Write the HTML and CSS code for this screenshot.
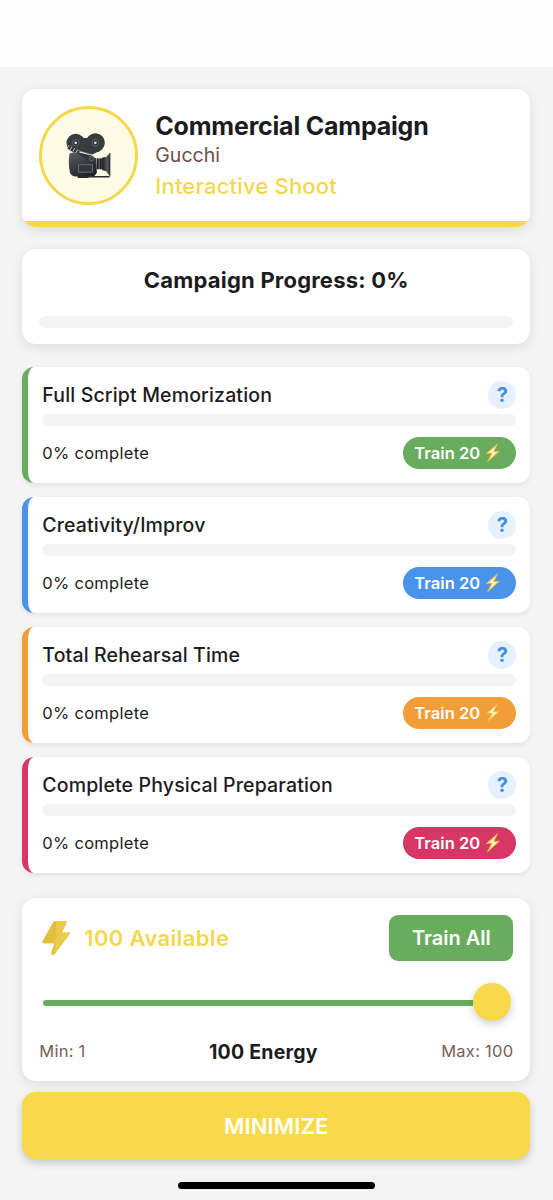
FILE: index.html
```html
<!DOCTYPE html>
<html lang="en">
<head>
<meta charset="utf-8">
<title>Commercial Campaign</title>
<link rel="stylesheet" href="styles.css">
</head>
<body>
<svg class="defs" width="0" height="0" aria-hidden="true">
  <defs>
    <linearGradient id="boltFill" x1="0" y1="0" x2="1" y2="1"><stop offset="0" stop-color="#f5b83a"/><stop offset=".5" stop-color="#fff3a0"/><stop offset="1" stop-color="#f3a533"/></linearGradient>
    <symbol id="bolt" viewBox="0 0 16 20"><path d="M12.400 1 1.300 10.600 7 10.100 2.600 18.700 14.400 8.200 8.600 8.700Z" fill="url(#boltFill)" stroke="#f2b544" stroke-width=".9" stroke-linejoin="round"/><path d="M10.500 4 4.200 9.600 8.600 9.200 5.700 14.700 11.600 9.300 7 9.700Z" fill="#fff8c9"/></symbol>
  </defs>
</svg>
<header class="status-bar"></header>
<main class="screen">
  <section class="card campaign">
    <div class="avatar">
      <svg class="camera" viewBox="0 0 48 48">
        <defs>
          <linearGradient id="body" x1="0" y1="0" x2=".6" y2="1"><stop offset="0" stop-color="#5b6266"/><stop offset=".5" stop-color="#3a4044"/><stop offset="1" stop-color="#222327"/></linearGradient>
          <linearGradient id="horn" x1="0" x2="1"><stop offset="0" stop-color="#17191b"/><stop offset=".6" stop-color="#565d62"/><stop offset="1" stop-color="#25282a"/></linearGradient>
        </defs>
        <circle cx="11" cy="11.300" r="9.500" fill="#383c3f"/>
        <circle cx="31" cy="11" r="9.700" fill="#383c3f"/>
        <path d="M14 4.500Q21 8 28 4.500L35 19.500 28 23 12 19Z" fill="#383c3f"/>
        <path d="M4.500 22 10 20.500 26 23.500 32 27 32.500 41Q31 45.500 27 45.500H11Q6 45 5 41Q3 32 4.500 22Z" fill="url(#body)"/>
        <path d="M13 45H45.500V46.500H24V47H13Z" fill="#2b2c2f"/>
        <rect x="32.500" y="27" width="6.500" height="11" fill="#50575b"/>
        <path d="M33.300 27V38M36.500 27V38" stroke="#202427" stroke-width="1.500"/>
        <path d="M38 26 42 25.500 46.300 21V45.800L42 40 38 39Z" fill="url(#horn)"/>
        <rect x="14" y="33.500" width="14" height="7.500" fill="#34363a" stroke="#858585" stroke-width=".7"/>
        <path d="M2.500 14.500 12 20 27 25 30 30H25L13 22 2.500 17Z" fill="#303538"/>
        <path d="M2 17 4 13.500M5 18.500 7 15M8 20 10 16.500M11 21.500 13 18" stroke="#d1d2d2" stroke-width=".9"/>
        <path d="M13 18.500 28 24" stroke="#888e91" stroke-width=".6"/>
        <circle cx="27" cy="27" r="2.500" fill="#41474b" stroke="#777d80" stroke-width=".6"/>
        <circle cx="11" cy="11" r="3.300" fill="#292d30" stroke="#777d80" stroke-width=".7"/><circle cx="11" cy="11" r="1.400" fill="#dedede"/>
        <circle cx="31" cy="11" r="3.300" fill="#292d30" stroke="#777d80" stroke-width=".7"/><circle cx="31" cy="11" r="1.400" fill="#dedede"/>
      </svg>
    </div>
    <div class="campaign-info">
      <h1 class="campaign-title">Commercial Campaign</h1>
      <p class="brand">Gucchi</p>
      <p class="kind">Interactive Shoot</p>
    </div>
  </section>

  <section class="card progress">
    <h2 class="progress-title">Campaign Progress: 0%</h2>
    <div class="bar"></div>
  </section>

  <section class="tasks">
    <article class="task green">
      <div class="row"><h3 class="task-title">Full Script Memorization</h3><button class="help">?</button></div>
      <div class="bar"></div>
      <div class="row"><span class="complete">0% complete</span><button class="train"><span>Train 20</span><svg class="mini-bolt"><use href="#bolt"/></svg></button></div>
    </article>
    <article class="task blue">
      <div class="row"><h3 class="task-title">Creativity/Improv</h3><button class="help">?</button></div>
      <div class="bar"></div>
      <div class="row"><span class="complete">0% complete</span><button class="train"><span>Train 20</span><svg class="mini-bolt"><use href="#bolt"/></svg></button></div>
    </article>
    <article class="task orange">
      <div class="row"><h3 class="task-title">Total Rehearsal Time</h3><button class="help">?</button></div>
      <div class="bar"></div>
      <div class="row"><span class="complete">0% complete</span><button class="train"><span>Train 20</span><svg class="mini-bolt"><use href="#bolt"/></svg></button></div>
    </article>
    <article class="task pink">
      <div class="row"><h3 class="task-title">Complete Physical Preparation</h3><button class="help">?</button></div>
      <div class="bar"></div>
      <div class="row"><span class="complete">0% complete</span><button class="train"><span>Train 20</span><svg class="mini-bolt"><use href="#bolt"/></svg></button></div>
    </article>
  </section>

  <section class="card energy">
    <div class="row">
      <div class="available">
        <svg class="big-bolt" viewBox="0 0 28 35"><path d="M13.500 1H23Q25 1 24.200 3L20 12H26.500Q28.800 12 27.300 14L12.600 33.500Q10.800 35.500 9.500 34Q8.800 33 9.300 31.500L12.300 23H2Q-.3 23 .6 20.800L11 2.500Q12 1 13.500 1Z" fill="#ebcb4c"/><path d="M14 1H13.500Q12 1 11 2.500L.6 20.800Q-.3 23 2 23H12.300L14 17Z" fill="#e3bd3e"/><path d="M12.300 23 9.300 31.500Q8.800 33 9.500 34 10.800 35.500 12.600 33.500L14 22Z" fill="#e5c343"/></svg>
        <span class="available-text">100 Available</span>
      </div>
      <button class="train-all">Train All</button>
    </div>
    <div class="slider"><div class="track"></div><div class="thumb"></div></div>
    <div class="limits"><span class="limit">Min: 1</span><strong class="amount">100 Energy</strong><span class="limit">Max: 100</span></div>
  </section>

  <button class="minimize">MINIMIZE</button>
  <div class="home-indicator"></div>
</main>
</body>
</html>
```
FILE: styles.css
```css
* { box-sizing: border-box; }
body { margin: 0; height: 1200px; overflow: hidden; background: #f4f4f4; color: #1c1c1e; font-family: Inter, "Liberation Sans", sans-serif; white-space: nowrap; }
h1, h2, h3, p { margin: 0; }
button { border: 0; padding: 0; font-family: inherit; color: #fff; }
.defs { position: absolute; }
.status-bar { height: 66.500px; background: #fefefe; }
.screen { padding: 22px 22.700px 0 22.300px; display: flex; flex-direction: column; }
.card { background: #fff; border-radius: 14px; box-shadow: 0 3px 12px rgba(0,0,0,.1); }
.row { display: flex; align-items: center; justify-content: space-between; }

.campaign { height: 138px; padding: 17px; background: linear-gradient(#fff 132.500px, #f8d94a 132.500px); display: flex; align-items: flex-start; gap: 17px; }
.avatar { width: 99px; height: 99px; border: 3px solid #f4d84c; border-radius: 50%; background: #fffbe4; display: flex; align-items: center; justify-content: center; }
.camera { width: 47px; height: 47px; }
.campaign-info { padding-top: 5px; }
.campaign-title { font-size: 25px; line-height: 30px; font-weight: 650; letter-spacing: -.2px; }
.brand { font-size: 19.500px; line-height: 28px; color: #6d5048; }
.kind { font-size: 22px; line-height: 34px; font-weight: 500; letter-spacing: .18px; color: #f4d84c; }

.progress { height: 95px; margin-top: 22.500px; padding: 16px 17px 0; }
.progress-title { text-align: center; font-size: 22px; line-height: 30px; font-weight: 650; letter-spacing: .2px; }
.bar { height: 11.500px; border-radius: 6px; background: #f4f4f4; }
.progress .bar { margin-top: 21px; }

.tasks { display: flex; flex-direction: column; gap: 14px; margin-top: 22.500px; }
.task { height: 116px; padding: 14px; border-left: 6px solid; border-radius: 12px; background: #fff; box-shadow: 0 2px 5px rgba(0,0,0,.08); }
.green { --accent: #68ad5e; }
.blue { --accent: #4994ea; }
.orange { --accent: #f29e38; }
.pink { --accent: #d83664; }
.task { border-left-color: var(--accent); }
.task-title { font-size: 19.500px; line-height: 28px; font-weight: 500; letter-spacing: .15px; }
.help { width: 28px; height: 28px; border-radius: 50%; background: #e5f2fd; color: #458ee0; font-size: 20px; line-height: 28px; font-weight: 650; }
.task .bar { margin: 5.500px 0 11px; }
.complete { padding-top: 1.500px; font-size: 16.500px; line-height: 31px; letter-spacing: .3px; }
.train { width: 113.500px; height: 31.500px; border-radius: 16px; background: var(--accent); padding: .5px 0 0 11.500px; display: flex; align-items: center; gap: 5px; font-size: 16.500px; font-weight: 600; letter-spacing: .05px; }
.mini-bolt { width: 16px; height: 20px; }

.energy { height: 183px; margin-top: 25px; padding: 17px; }
.available { display: flex; align-items: center; gap: 13.500px; padding-left: 3px; }
.big-bolt { width: 28.500px; height: 35.500px; }
.available-text { font-size: 22px; font-weight: 600; letter-spacing: .35px; color: #f4d84c; }
.train-all { width: 124px; height: 46.500px; border-radius: 9px; background: #68ad5e; font-size: 20px; font-weight: 600; }
.slider { height: 39px; margin: 21.200px 2.500px 0 4px; display: flex; align-items: center; }
.track { flex: 1; height: 6px; margin-top: 3px; border-radius: 3px 0 0 3px; background: #68ad5e; }
.thumb { width: 38px; height: 38px; border-radius: 50%; background: #f8d94a; box-shadow: 0 3px 8px rgba(0,0,0,.2); }
.limits { display: flex; justify-content: space-between; margin-top: 14.800px; line-height: 30px; }
.limit { font-size: 16.500px; letter-spacing: .25px; color: #7a6058; }
.amount { padding-top: 1px; font-size: 19.500px; font-weight: 650; letter-spacing: .25px; }
.minimize { height: 67px; margin-top: 11.500px; border-radius: 14px; background: #f8d94a; box-shadow: 0 4px 9px rgba(0,0,0,.18); font-size: 22px; font-weight: 600; letter-spacing: .15px; }
.home-indicator { width: 197px; height: 7px; margin: 22.500px auto 0; border-radius: 4px; background: #000; }
```
